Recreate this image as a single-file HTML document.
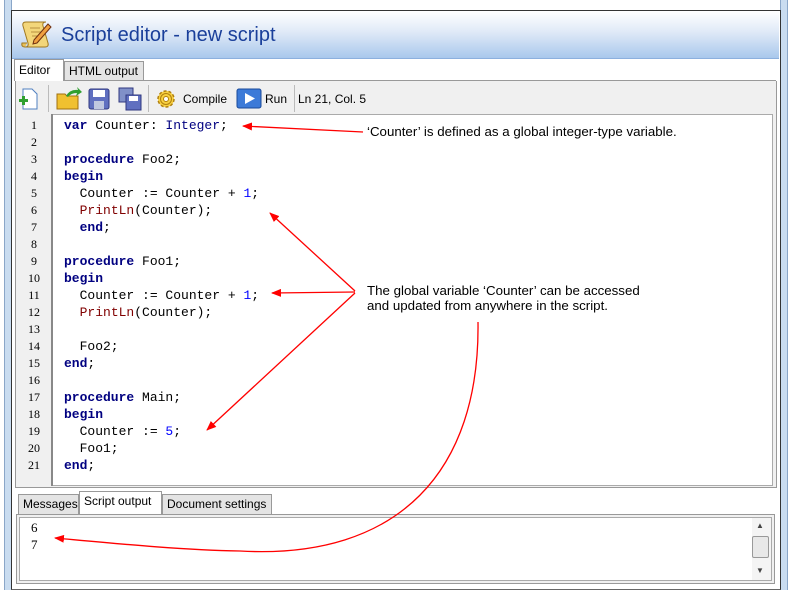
<!DOCTYPE html>
<html><head><meta charset="utf-8"><style>
body{margin:0;width:793px;height:590px;background:#fff;position:relative;overflow:hidden;font-family:"Liberation Sans",sans-serif}
.abs{position:absolute}
.code{font-family:"Liberation Mono",monospace;font-size:13px;line-height:17px;white-space:pre;color:#000}
.k{color:#000080;font-weight:bold}.t{color:#000080}.n{color:#0000ff}.p{color:#800000}
.gut{font-family:"Liberation Serif",serif;font-size:12px;line-height:17px;text-align:center}
.tab{position:absolute;font-size:12px;border:1px solid #999;background:#e4e4e4;padding:2px 4px;box-sizing:border-box}
</style></head><body>
<div class="abs" style="left:4px;top:0;width:6px;height:590px;background:#c9dcf0;border-left:1px solid #8aa6c8;border-right:1px solid #8aa6c8"></div>
<div class="abs" style="left:780px;top:0;width:6px;height:590px;background:#c9dcf0;border-left:1px solid #8aa6c8;border-right:1px solid #8aa6c8"></div>
<div class="abs" style="left:11px;top:10px;width:768px;height:578px;border:1px solid #333;border-bottom:1px solid #666"></div>
<div class="abs" style="left:12px;top:11px;width:767px;height:47px;background:linear-gradient(#ffffff,#dfe9f7 45%,#a9c8ec);"></div>
<div class="abs" style="left:12px;top:58px;width:767px;height:1px;background:#8cb0de"></div>
<svg class="abs" style="left:20px;top:18px" width="34" height="32" viewBox="0 0 34 32">
<path d="M6 4 Q2 4 3 8 L8 25 Q9 29 5 29 L25 29 Q29 29 28 25 L23 8 Q22 4 26 4 Z" fill="#f3d67a" stroke="#a07820" stroke-width="1"/>
<path d="M5 29 Q1 29 2 25 L7 25" fill="#e8c05a" stroke="#a07820"/>
<path d="M10 10h10M11 14h10M12 18h9" stroke="#b89040" stroke-width="1"/>
<path d="M14 22 L28 6 L31 9 L17 25 L13 26 Z" fill="#f0a040" stroke="#703010" stroke-width="1"/>
</svg>
<div class="abs" style="left:61px;top:24px;font-family:'Liberation Sans',sans-serif;font-size:20px;color:#1a3f9a">Script editor - new script</div>
<div class="abs" style="left:15px;top:80px;width:761px;height:1px;background:#999"></div>
<div class="tab" style="left:14px;top:59px;width:50px;height:22px;background:#fff;border-bottom:none;padding-top:3px">Editor</div>
<div class="tab" style="left:64px;top:61px;width:80px;height:20px">HTML output</div>
<div class="abs" style="left:15px;top:81px;width:760px;height:406px;border:1px solid #999;border-top:none;background:#f0f0f0"></div>
<svg class="abs" style="left:18px;top:87px" width="22" height="24"><path d="M5 2h9l5 5v15H5z" fill="#fff" stroke="#5080c0"/><rect x="1" y="12" width="9" height="3" fill="#30a030"/><rect x="4" y="9" width="3" height="9" fill="#30a030"/></svg>
<div class="abs" style="left:48px;top:85px;width:1px;height:27px;background:#bbb"></div>
<svg class="abs" style="left:56px;top:86px" width="26" height="24"><path d="M1 8h8l2 2h11v13H1z" fill="#f0c030" stroke="#a07010"/><path d="M10 10 Q14 3 22 4 L21 1 L26 6 L20 10 L21 7 Q15 7 12 11z" fill="#30a030"/></svg>
<svg class="abs" style="left:88px;top:88px" width="22" height="22"><rect x="1" y="1" width="20" height="20" rx="2" fill="#6070c0" stroke="#303880"/><rect x="5" y="2" width="12" height="7" fill="#fff"/><rect x="6" y="13" width="10" height="8" fill="#c0c8e0"/></svg>
<svg class="abs" style="left:118px;top:87px" width="24" height="24"><rect x="1" y="1" width="14" height="14" fill="#8090c8" stroke="#303880"/><rect x="8" y="8" width="15" height="15" fill="#6070c0" stroke="#303880"/><rect x="11" y="9" width="9" height="5" fill="#fff"/></svg>
<div class="abs" style="left:148px;top:85px;width:1px;height:27px;background:#bbb"></div>
<svg class="abs" style="left:155px;top:88px" width="22" height="22" viewBox="0 0 22 22"><circle cx="11" cy="11" r="8" fill="#f8d040" stroke="#b08010" stroke-width="1.5" stroke-dasharray="3 2"/><circle cx="11" cy="11" r="5.5" fill="#f8d040" stroke="#b08010"/><circle cx="11" cy="11" r="2.5" fill="#fff" stroke="#b08010"/></svg>
<div class="abs" style="left:183px;top:92px;font-size:12px">Compile</div>
<svg class="abs" style="left:236px;top:88px" width="26" height="21"><rect x="1" y="1" width="24" height="19" rx="2" fill="#3c7ad8" stroke="#1a4a9a"/><path d="M9 5 L19 10.5 L9 16z" fill="#fff"/></svg>
<div class="abs" style="left:265px;top:92px;font-size:12px">Run</div>
<div class="abs" style="left:294px;top:85px;width:1px;height:27px;background:#bbb"></div>
<div class="abs" style="left:298px;top:92px;font-size:12px">Ln 21, Col. 5</div>
<div class="abs" style="left:52px;top:114px;width:721px;height:372px;background:#fff;border:1px solid #aaa;box-sizing:border-box"></div>
<div class="abs" style="left:51px;top:114px;width:2px;height:372px;background:#888"></div>
<div class="abs gut" style="left:17px;top:117px;width:34px">1<br>2<br>3<br>4<br>5<br>6<br>7<br>8<br>9<br>10<br>11<br>12<br>13<br>14<br>15<br>16<br>17<br>18<br>19<br>20<br>21</div>
<div class="abs code" style="left:64px;top:117px"><span class="k">var</span> Counter: <span class="t">Integer</span>;

<span class="k">procedure</span> Foo2;
<span class="k">begin</span>
  Counter := Counter + <span class="n">1</span>;
  <span class="p">PrintLn</span>(Counter);
  <span class="k">end</span>;

<span class="k">procedure</span> Foo1;
<span class="k">begin</span>
  Counter := Counter + <span class="n">1</span>;
  <span class="p">PrintLn</span>(Counter);

  Foo2;
<span class="k">end</span>;

<span class="k">procedure</span> Main;
<span class="k">begin</span>
  Counter := <span class="n">5</span>;
  Foo1;
<span class="k">end</span>;</div>
<div class="abs" style="left:367px;top:124px;font-size:13.3px">‘Counter’ is defined as a global integer-type variable.</div>
<div class="abs" style="left:367px;top:283px;font-size:13.3px;line-height:15px">The global variable ‘Counter’ can be accessed<br>and updated from anywhere in the script.</div>
<div class="tab" style="left:18px;top:494px;width:61px;height:21px">Messages</div>
<div class="tab" style="left:79px;top:491px;width:83px;height:24px;background:#fff;border-bottom:none">Script output</div>
<div class="tab" style="left:162px;top:494px;width:110px;height:21px">Document settings</div>
<div class="abs" style="left:16px;top:514px;width:759px;height:70px;border:1px solid #999;box-sizing:border-box;background:#f0f0f0"></div>
<div class="abs" style="left:19px;top:517px;width:753px;height:64px;border:1px solid #aaa;box-sizing:border-box;background:#fff"></div>
<div class="abs" style="left:752px;top:518px;width:19px;height:62px;background:#f4f4f4"></div>
<div class="abs" style="left:752px;top:536px;width:15px;height:20px;border:1px solid #999;background:#e8e8e8;border-radius:2px"></div>
<div class="abs" style="left:756px;top:521px;font-size:8px;color:#444">▲</div>
<div class="abs" style="left:756px;top:566px;font-size:8px;color:#444">▼</div>
<div class="abs code" style="left:31px;top:519px;font-family:'Liberation Serif',serif;font-size:13px">6
7</div>
<svg class="abs" style="left:0;top:0" width="793" height="590">
<defs><marker id="a" markerWidth="10" markerHeight="8" refX="9" refY="4" orient="auto" markerUnits="userSpaceOnUse"><path d="M0 0L10 4L0 8z" fill="#f00"/></marker></defs>
<g stroke="#f00" stroke-width="1.3" fill="none" marker-end="url(#a)">
<line x1="363" y1="132" x2="243" y2="126"/>
<line x1="355" y1="291" x2="270" y2="213"/>
<line x1="355" y1="292" x2="272" y2="293"/>
<line x1="355" y1="293" x2="207" y2="430"/>
<path d="M478 322 C 480 470 400 560 240 551 C 180 550 110 543 55 538"/>
</g></svg>
</body></html>
